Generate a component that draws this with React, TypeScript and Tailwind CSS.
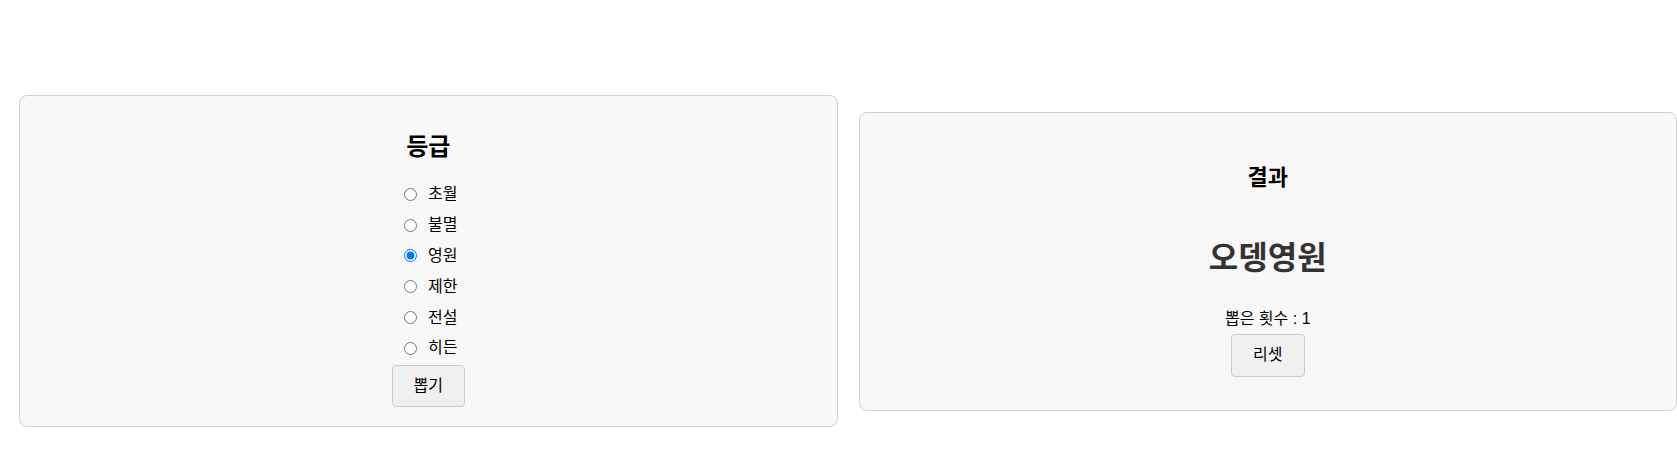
import { useState } from "react"

const grades = ["초월", "불멸", "영원", "제한", "전설", "히든"]

export default function App() {
  const [grade, setGrade] = useState("영원")
  const [count, setCount] = useState(1)

  return (
    <div
      className="flex items-center gap-[21px] pl-[19px] pt-[95px] pb-[47px] w-full text-black"
      style={{ fontFamily: '"Liberation Sans", "Noto Sans CJK KR", sans-serif' }}
    >
      {/* 등급 선택 */}
      <div className="flex-1 h-[332px] flex flex-col items-center bg-[#f8f8f8] border border-[#cfcfcf] rounded-[8px] pt-[33px]">
        <h2 className="text-[24px] leading-[36px] font-bold mb-[14px]">등급</h2>
        <div className="flex flex-col items-center">
          {grades.map((g) => (
            <label key={g} className="flex items-center h-[30.8px] text-[16px] leading-[20px]">
              <input
                type="radio"
                name="grade"
                checked={grade === g}
                onChange={() => setGrade(g)}
                className="m-0 ml-[5px] mr-[11px] w-[13px] h-[13px] accent-[#0075ff]"
              />
              {g}
            </label>
          ))}
        </div>
        <button
          onClick={() => setCount(count + 1)}
          className="mt-[1px] h-[42px] w-[73px] text-[16px] bg-[#f0f0f0] border border-[#cccccc] rounded-[4px]"
        >
          뽑기
        </button>
      </div>

      {/* 결과 */}
      <div className="flex-1 h-[299px] flex flex-col items-center bg-[#f8f8f8] border border-[#cfcfcf] rounded-[8px] pt-[48px]">
        <h3 className="text-[22px] leading-[33px] font-bold">결과</h3>
        <div className="mt-[40px] text-[32px] leading-[48px] font-bold text-[#333333]">오뎅영원</div>
        <p className="mt-[25px] text-[16px] leading-[24px]">뽑은 횟수 : {count}</p>
        <button
          onClick={() => setCount(0)}
          className="mt-[3px] h-[43px] w-[74px] text-[16px] bg-[#f0f0f0] border border-[#cccccc] rounded-[4px]"
        >
          리셋
        </button>
      </div>
    </div>
  )
}
